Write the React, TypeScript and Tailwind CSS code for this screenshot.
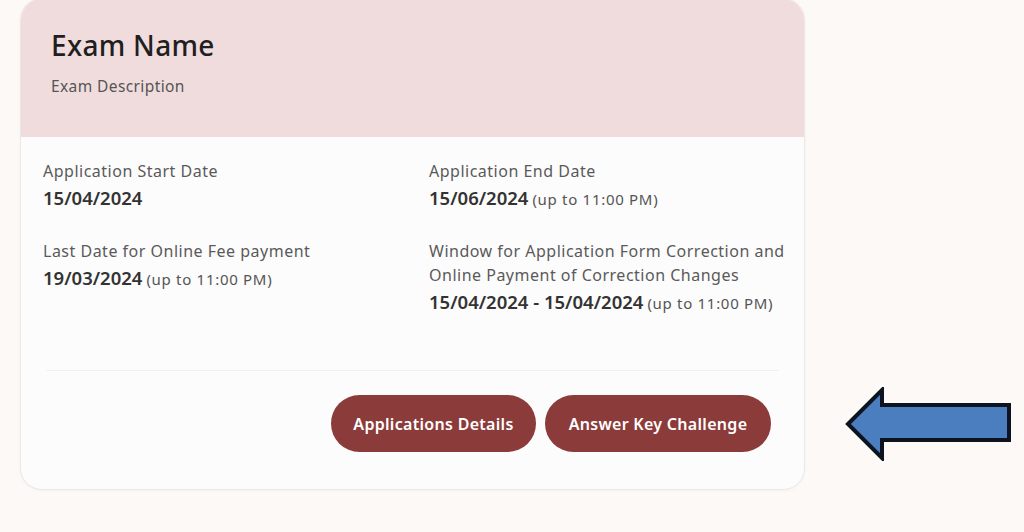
import React from "react"

function Field({ label, value, note }: { label: React.ReactNode; value: string; note?: string }) {
  return (
    <div className="flex flex-col">
      <div className="text-[16px] leading-6 tracking-[0.5px] text-[#5a5a5a] whitespace-nowrap">{label}</div>
      <div className="mt-[3px] text-[18.5px] leading-6 font-semibold text-[#333] whitespace-nowrap">
        {value}
        {note && <span className="ml-1 text-[15px] tracking-[0.7px] font-normal text-[#555]">{note}</span>}
      </div>
    </div>
  )
}

function Arrow() {
  return (
    <svg width="168" height="74" viewBox="0 0 168 74" className="block">
      <path
        d="M3 37 L37 3 L37 18 L164 18 L164 53 L37 53 L37 71 Z"
        fill="#4a7ebf"
        stroke="#0d1420"
        strokeWidth="4"
        strokeLinejoin="miter"
      />
    </svg>
  )
}

export default function App() {
  return (
    <div
      className="w-[1024px] h-[532px] bg-[#fdf9f7] overflow-hidden flex items-start"
      style={{ fontFamily: '"Noto Sans", "Open Sans", sans-serif' }}
    >
      <div className="ml-[20px] mt-[-2px] w-[785px] h-[492px] rounded-[22px] border border-[#ece8e8] bg-[#fdfcfc] overflow-hidden flex flex-col shadow-[0_1px_3px_rgba(0,0,0,0.04)]">
        <div className="h-[138px] bg-[#f0dcdd] pl-[30px] pt-[30px]">
          <h1 className="text-[28px] leading-8 font-medium tracking-[0.3px] text-[#1f1f1f]">Exam Name</h1>
          <p className="mt-[15px] text-[15.5px] leading-5 tracking-[0.4px] text-[#555]">Exam Description</p>
        </div>
        <div className="pl-[22px] pr-[10px] pt-[22px] grid grid-cols-[386px_1fr] gap-y-[28px]">
          <Field label="Application Start Date" value="15/04/2024" />
          <Field label="Application End Date" value="15/06/2024" note="(up to 11:00 PM)" />
          <Field label="Last Date for Online Fee payment" value="19/03/2024" note="(up to 11:00 PM)" />
          <Field
            label={
              <>
                Window for Application Form Correction and
                <br />
                Online Payment of Correction Changes
              </>
            }
            value="15/04/2024 - 15/04/2024"
            note="(up to 11:00 PM)"
          />
        </div>
        <div className="mx-[25px] mt-[55px] border-t border-[#eef0f2]" />
        <div className="flex justify-end gap-[9px] pr-[33px] mt-[24px]">
          <button className="w-[205px] h-[57px] rounded-full bg-[#8b3b3a] text-white text-[16px] tracking-[0.3px] font-semibold">
            Applications Details
          </button>
          <button className="w-[226px] h-[57px] rounded-full bg-[#8b3b3a] text-white text-[16px] tracking-[0.3px] font-semibold">
            Answer Key Challenge
          </button>
        </div>
      </div>
      <div className="ml-[40px] mt-[387px]">
        <Arrow />
      </div>
    </div>
  )
}
